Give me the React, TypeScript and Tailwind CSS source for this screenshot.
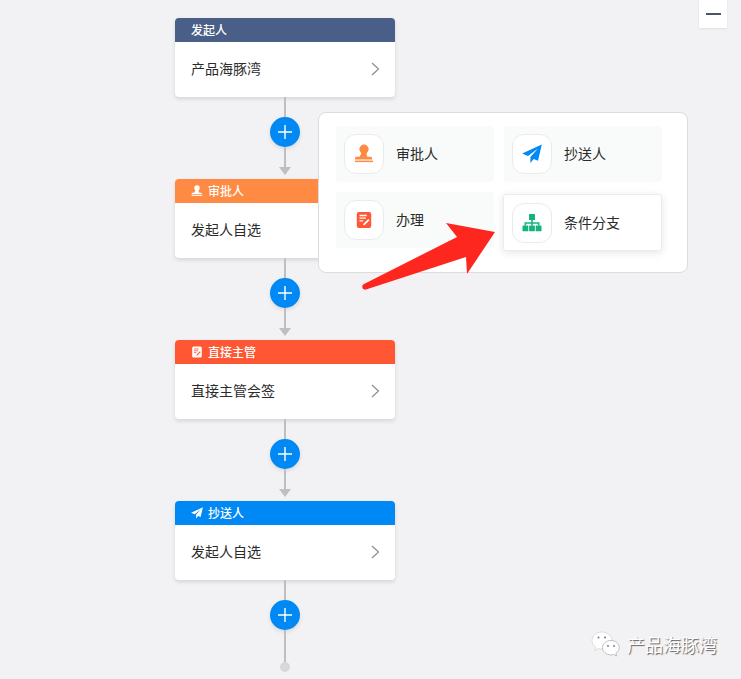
import { ReactNode } from 'react';

const font = { fontFamily: '"Noto Sans CJK SC", "Noto Sans", sans-serif' };

function StampIcon({ className }: { className?: string }) {
  return (
    <svg viewBox="0 0 20 20" className={className} fill="currentColor">
      <circle cx="10" cy="5.2" r="4.6" />
      <path d="M7.6 8.5h4.8l.5 3.2c.1.8.8 1.1 1.6 1.1h2.2c.7 0 1.3.6 1.3 1.3V15.5H1v-1.400c0-.7.6-1.300 1.300-1.300h2.200c.8 0 1.500-.3 1.600-1.100z" />
      <rect x="1" y="16.600" width="18" height="1.500" />
    </svg>
  );
}

function PlaneIcon({ className }: { className?: string }) {
  return (
    <svg viewBox="0 0 20 20" className={className} fill="currentColor">
      <path d="M19.800 .6 .2 9.600l5.800 2.300L16 4.600 8.400 13v6l3.300-4.100 4.300 1.800z" />
    </svg>
  );
}

function NoteIcon({ className, ink = '#fff' }: { className?: string; ink?: string }) {
  return (
    <svg viewBox="0 0 20 20" className={className}>
      <rect x="2" y="1" width="16" height="18" rx="2.500" fill="currentColor" />
      <path d="M5 5h8M5 8h7M5 11h4" stroke={ink} strokeWidth="1.400" fill="none" />
      <path d="M9.500 15.500l6-6" stroke={ink} strokeWidth="2" fill="none" />
    </svg>
  );
}

function TreeIcon({ className }: { className?: string }) {
  return (
    <svg viewBox="0 0 20 20" className={className} fill="currentColor">
      <rect x="7" y="1" width="6" height="6" rx=".5" />
      <rect x=".5" y="12.500" width="5.800" height="5.800" rx=".5" />
      <rect x="7.100" y="12.500" width="5.800" height="5.800" rx=".5" />
      <rect x="13.700" y="12.500" width="5.800" height="5.800" rx=".5" />
      <path d="M9.200 7h1.600v2.200h6.700v3.300h-1.600v-1.700h-5.100v1.700H9.200v-1.700H4.100v1.700H2.500V9.200h6.700z" />
    </svg>
  );
}

function Connector({ last }: { last?: boolean }) {
  return (
    <div className="flex flex-col items-center">
      <div className="w-[2px] h-5 bg-[#bfbfc1]" />
      <button className="w-[30px] h-[30px] rounded-full bg-[#0089f5] shadow-[0_2px_4px_rgba(0,0,0,0.1)] flex items-center justify-center">
        <svg viewBox="0 0 14 14" className="w-[14px] h-[14px]" stroke="#fff" strokeWidth="1.400">
          <path d="M7 0v14M0 7h14" />
        </svg>
      </button>
      {last ? (
        <>
          <div className="w-[2px] h-8 bg-[#bfbfc1]" />
          <div className="w-[10px] h-[10px] rounded-full bg-[#d8d8da]" />
        </>
      ) : (
        <>
          <div className="w-[2px] h-5 bg-[#bfbfc1]" />
          <div className="w-0 h-0 mb-1 border-x-[6px] border-x-transparent border-t-[8px] border-t-[#bfbfc1]" />
        </>
      )}
    </div>
  );
}

function NodeCard({ title, text, color, icon }: { title: string; text: string; color: string; icon?: ReactNode }) {
  return (
    <div className="w-[220px] rounded-[4px] bg-white shadow-[0_2px_4px_rgba(0,0,0,0.12)] overflow-hidden">
      <div className={`h-6 pl-4 flex items-center gap-[5px] text-white text-xs font-medium ${color}`}>
        {icon}
        <span className="pb-[1px]">{title}</span>
      </div>
      <div className="h-[55px] pl-4 pr-[15px] flex items-center justify-between text-sm text-[#2b2b2b]">
        <span className="pb-[3px]">{text}</span>
        <svg viewBox="0 0 9 14" className="w-[9px] h-[14px] mb-[1px]" fill="none" stroke="#8f8f8f" strokeWidth="1.200">
          <path d="M1 1l6.500 6L1 13" />
        </svg>
      </div>
    </div>
  );
}

function PopupItem({ label, icon, active }: { label: string; icon: ReactNode; active?: boolean }) {
  return (
    <div
      className={
        active
          ? 'relative top-[2px] -ml-px w-[159px] h-[57px] pl-2 flex items-center gap-3 rounded-[3px] bg-white border border-[#ececee] shadow-[0_2px_8px_rgba(0,0,0,0.1)]'
          : 'h-14 pl-2 flex items-center gap-3 rounded-[3px] bg-[#f9fafa]'
      }
    >
      <div className="w-10 h-10 rounded-xl bg-white border border-[#ebebed] flex items-center justify-center">{icon}</div>
      <span className={`${active ? 'pb-[1px]' : 'pb-[3px]'} text-sm text-[#2b2b2b]`}>{label}</span>
    </div>
  );
}

export default function App() {
  return (
    <div className="relative h-[679px] overflow-hidden bg-[#f2f2f5]" style={font}>
      <div className="w-[220px] ml-[175px] pt-[18px] flex flex-col">
        <NodeCard title="发起人" text="产品海豚湾" color="bg-[#4a5f88]" />
        <Connector />
        <NodeCard
          title="审批人"
          text="发起人自选"
          color="bg-[#ff8a43]"
          icon={<StampIcon className="w-3 h-3 text-white" />}
        />
        <Connector />
        <NodeCard
          title="直接主管"
          text="直接主管会签"
          color="bg-[#ff5733]"
          icon={<NoteIcon className="w-3 h-3 text-white" ink="#ff5733" />}
        />
        <Connector />
        <NodeCard
          title="抄送人"
          text="发起人自选"
          color="bg-[#0089f5]"
          icon={<PlaneIcon className="w-3 h-3 text-white" />}
        />
        <Connector last />
      </div>

      {/* 添加节点弹窗 */}
      <div className="absolute left-[318px] top-[112px] w-[370px] h-[161px] rounded-lg bg-white border border-[#dcdce0] pl-[17px] pt-[13px]">
        <div className="grid grid-cols-[158px_158px] gap-[10px]">
          <PopupItem label="审批人" icon={<StampIcon className="w-5 h-5 text-[#ff8a43]" />} />
          <PopupItem label="抄送人" icon={<PlaneIcon className="w-5 h-5 text-[#0089f5]" />} />
          <PopupItem label="办理" icon={<NoteIcon className="w-[18px] h-[18px] text-[#ff5733]" />} />
          <PopupItem label="条件分支" icon={<TreeIcon className="w-5 h-5 text-[#13b57c]" />} active />
        </div>
      </div>

      {/* 红色箭头标注 */}
      <svg className="absolute left-[355px] top-[215px] w-[150px] h-[85px]" viewBox="355 215 150 85">
        <path
          d="M446 223 495 232 467 274 466 257 366 289.500C362 290.500 361 285.500 364 284L457 237z"
          fill="#fe2720"
        />
      </svg>

      <div className="absolute right-[14px] top-0 w-7 h-7 bg-white shadow-[0_1px_2px_rgba(0,0,0,0.08)] flex items-center justify-center">
        <div className="w-[15px] h-[2px] bg-[#4b5563]" />
      </div>

      {/* 水印 */}
      <div className="absolute left-[591px] top-[630px] flex items-center gap-[6px] text-white text-lg [text-shadow:1px_1px_1px_rgba(0,0,0,0.6)]">
        <svg viewBox="0 0 30 26" className="w-[30px] h-[26px]">
          <path d="M11 1C5.500 1 1 4.800 1 9.500c0 2.700 1.500 5 3.800 6.600L4 19.500l3.600-2c1.100.3 2.200.5 3.400.5 5.500 0 10-3.800 10-8.500S16.500 1 11 1z" fill="#fff" stroke="#c9c9cc" strokeWidth=".6" />
          <path d="M20 9.500c-4.700 0-8.500 3.200-8.500 7.200s3.800 7.200 8.500 7.200c.9 0 1.800-.1 2.600-.4l3 1.500-.7-2.800c2-1.300 3.300-3.300 3.300-5.500 0-4-3.500-7.200-8.200-7.200z" fill="#fff" stroke="#9a9a9e" strokeWidth=".6" />
          <circle cx="7.500" cy="6.500" r="1" fill="#777" />
          <circle cx="14" cy="6.500" r="1" fill="#777" />
          <circle cx="17" cy="15" r=".9" fill="#777" />
          <circle cx="23" cy="15" r=".9" fill="#777" />
        </svg>
        <span>产品海豚湾</span>
      </div>
    </div>
  );
}
